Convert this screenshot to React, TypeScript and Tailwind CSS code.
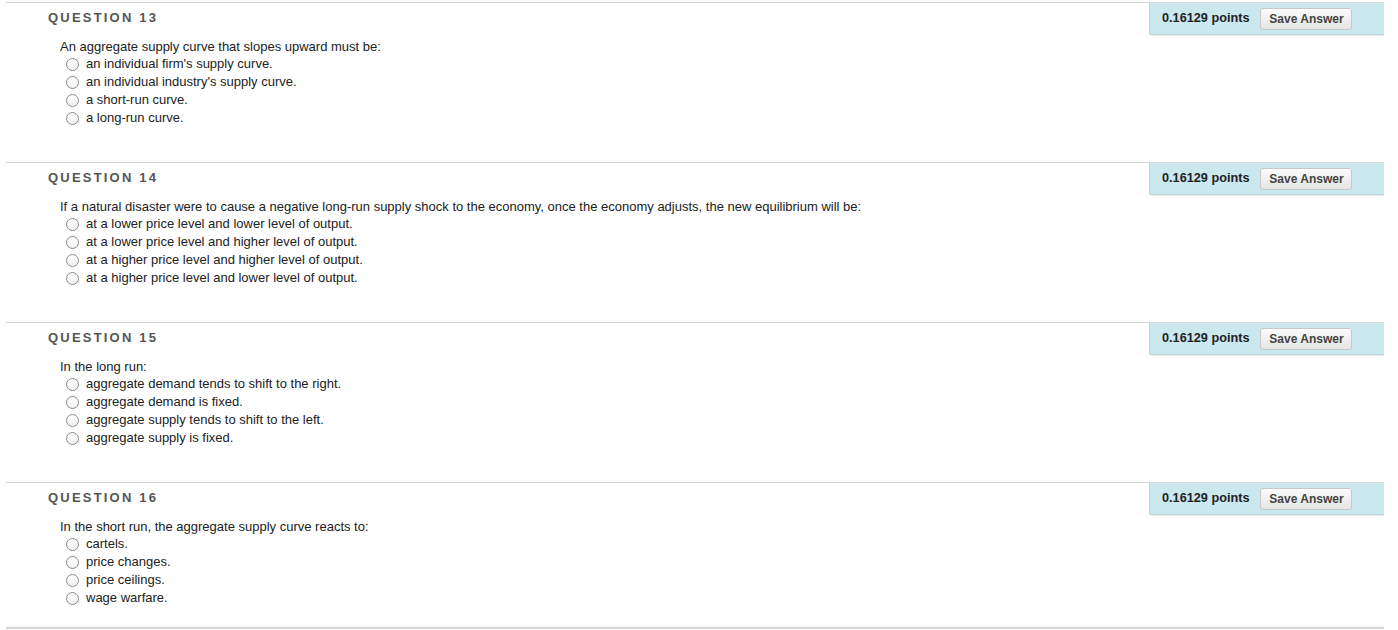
import React from 'react';

type Question = {
  num: number;
  text: string;
  options: string[];
};

const QUESTIONS: Question[] = [
  {
    num: 13,
    text: 'An aggregate supply curve that slopes upward must be:',
    options: [
      "an individual firm's supply curve.",
      "an individual industry's supply curve.",
      'a short-run curve.',
      'a long-run curve.',
    ],
  },
  {
    num: 14,
    text: 'If a natural disaster were to cause a negative long-run supply shock to the economy, once the economy adjusts, the new equilibrium will be:',
    options: [
      'at a lower price level and lower level of output.',
      'at a lower price level and higher level of output.',
      'at a higher price level and higher level of output.',
      'at a higher price level and lower level of output.',
    ],
  },
  {
    num: 15,
    text: 'In the long run:',
    options: [
      'aggregate demand tends to shift to the right.',
      'aggregate demand is fixed.',
      'aggregate supply tends to shift to the left.',
      'aggregate supply is fixed.',
    ],
  },
  {
    num: 16,
    text: 'In the short run, the aggregate supply curve reacts to:',
    options: ['cartels.', 'price changes.', 'price ceilings.', 'wage warfare.'],
  },
];

function Radio() {
  return (
    <span className="inline-block w-[13px] h-[13px] rounded-full border border-[#8c8c8c] bg-gradient-to-b from-white to-[#f1f1f1] shrink-0" />
  );
}

function QuestionBlock({ q, last }: { q: Question; last: boolean }) {
  return (
    <section className={last ? 'h-[145px] border-t border-[#d4d4d4]' : 'h-[160px] border-t border-[#d4d4d4]'}>
      {/* header row: title + points box */}
      <div className="flex items-start justify-between">
        <h3 className="pl-[42px] pt-[7px] text-[13px] leading-[16px] font-bold tracking-[2.2px] text-[#555]">
          QUESTION {q.num}
        </h3>
        <div className="w-[235px] h-[32px] bg-[#cbe8ee] rounded-bl-[3px] border-b border-l border-[#b9d4da] shadow-[0_1px_1px_rgba(0,0,0,0.08)] flex items-center pl-[12px] gap-[11px]">
          <span className="text-[12.7px] font-bold text-[#222]">0.16129 points</span>
          <button
            type="button"
            className="h-[22px] w-[92px] rounded-[3px] border border-[#c8c8c8] bg-gradient-to-b from-[#fbfbfb] to-[#e6e6e6] text-[12px] font-bold text-[#444]"
          >
            Save Answer
          </button>
        </div>
      </div>

      {/* question body */}
      <div className="pl-[54px] pt-[4px] text-[13px] text-[#222]">
        <p className="leading-[16px]">{q.text}</p>
        <ul className="leading-[18px]">
          {q.options.map((opt) => (
            <li key={opt} className="flex items-center gap-[7px] pl-[6px]">
              <Radio />
              <span>{opt}</span>
            </li>
          ))}
        </ul>
      </div>
    </section>
  );
}

export default function App() {
  return (
    <div
      className="bg-white w-[1398px] h-[630px] overflow-hidden pt-[2px] pl-[6px] pr-[14px]"
      style={{ fontFamily: '"Liberation Sans", Arial, sans-serif' }}
    >
      {QUESTIONS.map((q, i) => (
        <QuestionBlock key={q.num} q={q} last={i === QUESTIONS.length - 1} />
      ))}
      <div className="border-t-2 border-[#d8d8d8] shadow-[0_-1px_2px_rgba(0,0,0,0.06)]" />
    </div>
  );
}
